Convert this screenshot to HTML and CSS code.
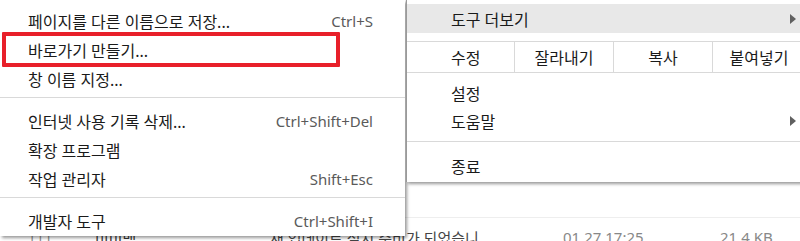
FILE: index.html
```html
<!DOCTYPE html>
<html lang="ko">
<head>
    <meta charset="UTF-8">
    <meta name="viewport" content="width=device-width, initial-scale=1.0">
    <title>메뉴</title>
    <link rel="stylesheet" href="styles.css">
</head>
<body>
    <!-- 뒤쪽 다운로드 목록 -->
    <div class="page">
        <div class="list-row empty"></div>
        <div class="list-row">
            <span class="icon-col">|||</span>
            <span class="name-col">미미백</span>
            <span class="desc-col">새 업데이트 설치 준비가 되었습니</span>
            <span class="date-col">01.27 17:25</span>
            <span class="size-col">21.4 KB</span>
        </div>
    </div>

    <!-- 왼쪽 하위 메뉴 -->
    <div class="menu menu-left">
        <div class="item"><span>페이지를 다른 이름으로 저장...</span><span class="key">Ctrl+S</span></div>
        <div class="item"><span>바로가기 만들기...</span></div>
        <div class="item"><span>창 이름 지정...</span></div>
        <div class="sep"></div>
        <div class="item"><span>인터넷 사용 기록 삭제...</span><span class="key">Ctrl+Shift+Del</span></div>
        <div class="item"><span>확장 프로그램</span></div>
        <div class="item"><span>작업 관리자</span><span class="key">Shift+Esc</span></div>
        <div class="sep"></div>
        <div class="item"><span>개발자 도구</span><span class="key">Ctrl+Shift+I</span></div>
    </div>

    <div class="highlight-box"></div>

    <!-- 오른쪽 메인 메뉴 -->
    <div class="menu menu-right">
        <div class="item active"><span>도구 더보기</span><span class="arrow"></span></div>
        <div class="edit-row">
            <span class="edit-label">수정</span>
            <span class="edit-btn">잘라내기</span>
            <span class="edit-btn">복사</span>
            <span class="edit-btn last">붙여넣기</span>
        </div>
        <div class="item"><span>설정</span></div>
        <div class="item"><span>도움말</span><span class="arrow"></span></div>
        <div class="sep"></div>
        <div class="item"><span>종료</span></div>
    </div>
</body>
</html>
```

FILE: styles.css
```css
body {
    margin: 0;
    width: 800px;
    height: 241px;
    overflow: hidden;
    background-color: #ffffff;
    font-family: 'Noto Sans', 'Noto Sans CJK KR', sans-serif;
    font-size: 16px;
    color: #1a1a1a;
    position: relative;
}

.page {
    padding-top: 184px;
}

.list-row {
    display: flex;
    align-items: flex-start;
    height: 44px;
    padding-top: 9px;
    box-sizing: border-box;
    color: #555555;
    font-size: 15px;
    white-space: nowrap;
}

.list-row.empty {
    height: 34px;
    border-bottom: 1px solid #eeeeee;
}

.icon-col {
    width: 95px;
    padding-left: 28px;
    box-sizing: border-box;
    color: #888888;
}

.name-col {
    width: 175px;
    color: #333333;
}

.desc-col {
    width: 293px;
    color: #444444;
}

.date-col {
    width: 157px;
    color: #888888;
}

.size-col {
    color: #888888;
}

.menu {
    position: absolute;
    top: 0;
    background-color: #ffffff;
    box-shadow: 2px 2px 3px rgba(0, 0, 0, 0.4);
    box-sizing: border-box;
}

.menu-left {
    left: 0;
    width: 405px;
    height: 236px;
    padding: 6px 0 1px;
}

.menu-right {
    left: 406px;
    width: 400px;
    height: 182px;
    padding: 4px 0 3px;
    border-left: 1px solid #9a9a9a;
}

.item {
    display: flex;
    justify-content: space-between;
    align-items: center;
    height: 29px;
    white-space: nowrap;
}

.menu-left .item {
    padding: 0 32px 0 28px;
}

.menu-right .item {
    height: 28px;
    padding: 0 0 0 44px;
    position: relative;
}

.menu-right .item.active {
    height: 29px;
    background-color: #e8e8e8;
}

.key {
    color: #5a5a5a;
    font-size: 15px;
}

.sep {
    height: 1px;
    background-color: #d9d9d9;
    margin: 4px 0 8px;
}

.menu-right .sep {
    margin: 6px 0 10px;
}

.arrow {
    position: absolute;
    right: 10px;
    top: 50%;
    margin-top: -5px;
    width: 0;
    height: 0;
    border-top: 5px solid transparent;
    border-bottom: 5px solid transparent;
    border-left: 6px solid #606060;
}

.edit-row {
    display: flex;
    height: 32px;
    margin: 8px 0 6px;
    border-top: 1px solid #d9d9d9;
    border-bottom: 1px solid #d9d9d9;
    box-sizing: border-box;
    align-items: stretch;
}

.edit-label {
    width: 107px;
    padding-left: 44px;
    box-sizing: border-box;
    display: flex;
    align-items: center;
}

.edit-btn {
    width: 98px;
    border-left: 1px solid #d9d9d9;
    display: flex;
    align-items: center;
    justify-content: center;
}

.edit-btn.last {
    width: 92px;
}

.highlight-box {
    position: absolute;
    left: 2px;
    top: 32px;
    width: 338px;
    height: 35px;
    box-sizing: border-box;
    border: 4px solid #e8202a;
    border-radius: 1px;
}
```
